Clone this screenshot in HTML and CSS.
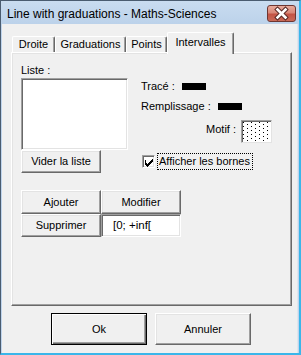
FILE: index.html
```
<!DOCTYPE html>
<html>
<head>
<meta charset="utf-8">
<link rel="stylesheet" href="styles.css">
</head>
<body>
<div class="window">
  <div class="titlebar">
    <span class="title">Line with graduations - Maths-Sciences</span>
    <div class="close">
      <svg width="29" height="17" viewBox="0 0 29 17">
        <path d="M10.5 4.5 L18.5 12.5 M18.5 4.5 L10.5 12.5" stroke="#5a2a26" stroke-width="4.6" stroke-linecap="square" fill="none"/>
        <path d="M10.5 4.5 L18.5 12.5 M18.5 4.5 L10.5 12.5" stroke="#ffffff" stroke-width="2.6" stroke-linecap="square" fill="none"/>
      </svg>
    </div>
  </div>
  <div class="client">
    <div class="tabs">
      <div class="tab t-droite">Droite</div>
      <div class="tab t-grad">Graduations</div>
      <div class="tab t-points">Points</div>
      <div class="tab t-int active">Intervalles</div>
    </div>
    <div class="pane">
      <div class="top">
        <div class="label">Liste :</div>
        <div class="right">
          <div class="row first"><span>Tracé :</span><span class="swatch"></span></div>
          <div class="row"><span>Remplissage :</span><span class="swatch"></span></div>
          <div class="motif">
            <span class="motif-label">Motif :</span>
            <div class="pattern">
              <svg width="29" height="21" viewBox="0 0 29 21" shape-rendering="crispEdges">
                <defs>
                  <pattern id="dots" width="8" height="8" patternUnits="userSpaceOnUse">
                    <rect x="1" y="1" width="1" height="1" fill="#000"/>
                    <rect x="5" y="3" width="1" height="1" fill="#000"/>
                    <rect x="1" y="5" width="1" height="1" fill="#000"/>
                    <rect x="5" y="7" width="1" height="1" fill="#000"/>
                  </pattern>
                </defs>
                <rect width="29" height="21" fill="url(#dots)"/>
              </svg>
            </div>
          </div>
        </div>
        <div class="listbox"></div>
        <div class="btn vider">Vider la liste</div>
        <div class="check">
          <span class="box">
            <svg width="11" height="11" viewBox="0 0 11 11" shape-rendering="crispEdges">
              <path d="M2 4h1v3h1v1h1v-1h1v-1h1v-1h1v-1h1v-1h1v3h-1v1h-1v1h-1v1h-1v1h-1v1h-1v-1h-1v-1h-1z" fill="#000"/>
            </svg>
          </span>
          <span class="check-label">Afficher les bornes</span>
        </div>
      </div>
      <div class="actions">
        <div class="btn">Ajouter</div>
        <div class="btn">Modifier</div>
        <div class="btn">Supprimer</div>
        <div class="field">[0; +inf[</div>
      </div>
    </div>
    <div class="footer">
      <div class="btn big default">Ok</div>
      <div class="btn big">Annuler</div>
    </div>
  </div>
</div>
</body>
</html>
```
FILE: styles.css
```
* { box-sizing: border-box; }
html, body { margin: 0; padding: 0; background: #ffffff; }
body { font-family: "Liberation Sans", Arial, sans-serif; font-size: 11px; color: #000; }

.window {
  width: 301px;
  height: 355px;
  border-top: 1px solid #4a5c70;
  border-left: 1px solid #4a5c70;
  border-right: 2px solid #3ab6ea;
  border-bottom: 2px solid #3ab6ea;
  background: #bfd4ec;
  display: flex;
  flex-direction: column;
}

.titlebar {
  height: 23px;
  display: flex;
  align-items: flex-start;
  background: linear-gradient(#c9dcf0, #bcd2ea);
}
.title {
  font-size: 12px;
  line-height: 15px;
  margin: 6px 0 0 6px;
  color: #000;
}
.close {
  margin: 4px 3px 0 auto;
  width: 29px;
  height: 17px;
  border: 1px solid #6e3631;
  border-radius: 3px;
  background: linear-gradient(#e8aa9c 0%, #d98878 45%, #c45445 55%, #c96a58 100%);
  display: flex;
  align-items: center;
  justify-content: center;
  overflow: hidden;
}
.close svg { display: block; margin: -1px; }

.client {
  margin-left: 1px;
  width: 296px;
  height: 329px;
  background: #f0f0f0;
  border-right: 1px solid #dfe6ee;
}

.tabs {
  display: flex;
  align-items: flex-end;
  height: 20px;
  margin: 8px 0 0 10px;
}
.tab {
  height: 16px;
  line-height: 13px;
  padding-top: 1px;
  text-align: center;
  border-top: 1px solid #ffffff;
  border-left: 1px solid #ffffff;
  border-right: 1px solid #696969;
  box-shadow: inset -1px 0 0 #a0a0a0;
  border-radius: 2px 2px 0 0;
  background: #f0f0f0;
}
.t-droite { width: 43px; }
.t-grad { width: 71px; }
.t-points { width: 41px; }
.t-int { width: 67px; }
.tab.active {
  height: 22px;
  padding-top: 3px;
  margin-bottom: -2px;
  position: relative;
  z-index: 1;
}

.pane {
  margin-left: 9px;
  width: 281px;
  height: 254px;
  border-top: 1px solid #ffffff;
  border-left: 1px solid #ffffff;
  border-right: 1px solid #696969;
  border-bottom: 1px solid #696969;
  box-shadow: inset -1px -1px 0 #a0a0a0, inset 1px 1px 0 #e3e3e3;
  padding: 11px 0 0 9px;
}

.top {
  display: grid;
  grid-template-columns: 107px 1fr;
  column-gap: 13px;
}
.label { line-height: 13px; height: 14px; grid-column: 1; grid-row: 1; }
.listbox {
  grid-column: 1;
  grid-row: 2;
  height: 72px;
  background: #ffffff;
  border-top: 1px solid #a0a0a0;
  border-left: 1px solid #a0a0a0;
  border-right: 1px solid #ffffff;
  border-bottom: 1px solid #ffffff;
  box-shadow: inset 1px 1px 0 #696969, inset -1px -1px 0 #e3e3e3;
}
.right {
  grid-column: 2;
  grid-row: 1 / 3;
  width: 131px;
}
.row {
  display: flex;
  align-items: center;
  line-height: 13px;
  margin-top: 7px;
}
.row.first { margin-top: 16px; }
.swatch {
  width: 24px;
  height: 7px;
  background: #000;
  margin-left: 7px;
}
.row.first .swatch { margin-left: 7px; }
.motif {
  display: flex;
  justify-content: flex-end;
  margin-top: 7px;
}
.motif-label { line-height: 13px; margin-top: 3px; margin-right: 5px; }
.pattern {
  width: 31px;
  height: 23px;
  background: #ffffff;
  border-top: 1px solid #a0a0a0;
  border-left: 1px solid #a0a0a0;
  border-right: 1px solid #e3e3e3;
  border-bottom: 1px solid #e3e3e3;
  box-shadow: inset 1px 1px 0 #696969;
}
.pattern svg { display: block; }

.btn {
  background: #f0f0f0;
  border-top: 1px solid #ffffff;
  border-left: 1px solid #ffffff;
  border-right: 1px solid #696969;
  border-bottom: 1px solid #696969;
  box-shadow: inset -1px -1px 0 #a0a0a0, inset 1px 1px 0 #e3e3e3;
  display: flex;
  align-items: center;
  justify-content: center;
  line-height: 13px;
}
.vider {
  grid-column: 1;
  grid-row: 3;
  width: 80px;
  height: 23px;
}
.check {
  grid-column: 2;
  grid-row: 3;
  align-self: center;
  display: flex;
  align-items: center;
  margin-left: 1px;
}
.box {
  width: 13px;
  height: 13px;
  background: #ffffff;
  border-top: 1px solid #a0a0a0;
  border-left: 1px solid #a0a0a0;
  border-right: 1px solid #ffffff;
  border-bottom: 1px solid #ffffff;
  box-shadow: inset 1px 1px 0 #696969, inset -1px -1px 0 #e3e3e3;
  display: flex;
  align-items: center;
  justify-content: center;
}
.box svg { display: block; }
.check-label {
  margin-left: 2px;
  height: 17px;
  line-height: 15px;
  padding: 0 2px 0 1px;
  border: 1px dotted #000;
}

.actions {
  display: grid;
  grid-template-columns: 80px 80px;
  grid-template-rows: 24px 23px;
  margin-top: 17px;
}
.field {
  background: #ffffff;
  border-top: 1px solid #a0a0a0;
  border-left: 1px solid #a0a0a0;
  border-right: 1px solid #ffffff;
  border-bottom: 1px solid #ffffff;
  box-shadow: inset 1px 1px 0 #696969, inset -1px -1px 0 #e3e3e3;
  line-height: 13px;
  padding: 4px 0 0 11px;
  font-size: 11.5px;
}

.footer {
  display: flex;
  gap: 8px;
  margin: 7px 0 0 49px;
}
.big {
  width: 96px;
  height: 32px;
}
.default {
  border: 1px solid #000;
  box-shadow: inset 1px 1px 0 #ffffff, inset -1px -1px 0 #696969, inset -2px -2px 0 #a0a0a0;
}
```
